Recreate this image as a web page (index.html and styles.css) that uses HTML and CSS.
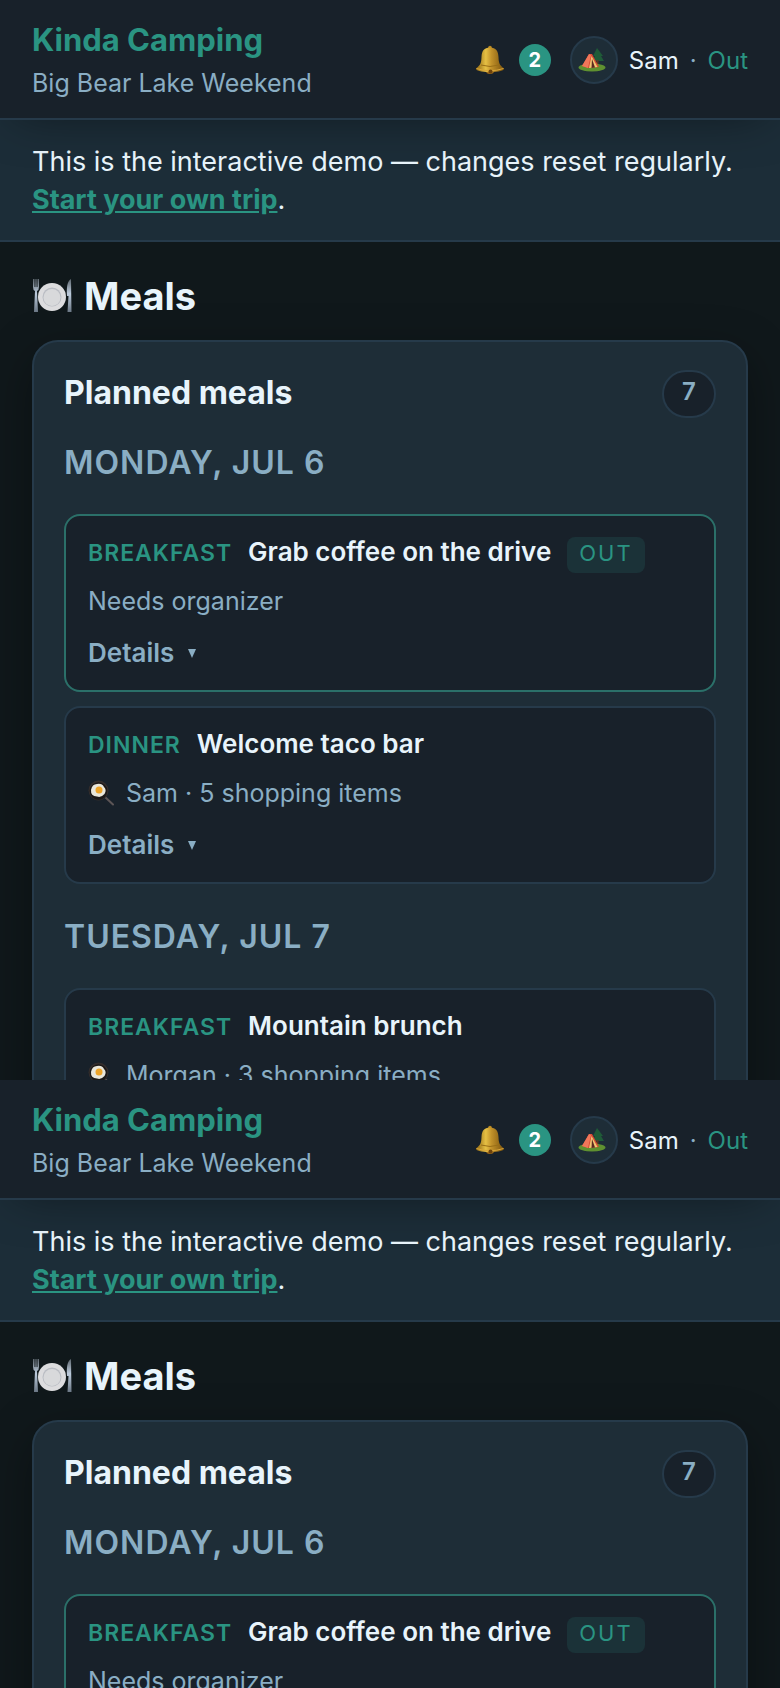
FILE: index.html
```
<!DOCTYPE html>
<html lang="en">
<head>
  <meta charset="UTF-8">
  <meta name="viewport" content="width=device-width, initial-scale=1.0">
  <title>Kinda Camping - Meals</title>
  <link rel="stylesheet" href="styles.css">
</head>
<body>
  <!-- shared icons -->
  <svg class="sprite" aria-hidden="true">
    <defs>
      <linearGradient id="gold" x1="0" x2="1" y1="0" y2="0">
        <stop offset="0" stop-color="#8d6410"/>
        <stop offset="0.35" stop-color="#e6c044"/>
        <stop offset="0.55" stop-color="#c2922a"/>
        <stop offset="1" stop-color="#7a520c"/>
      </linearGradient>
      <linearGradient id="steel" x1="0" x2="0" y1="0" y2="1">
        <stop offset="0" stop-color="#5d666e"/>
        <stop offset="0.45" stop-color="#bccbdc"/>
        <stop offset="1" stop-color="#6c7886"/>
      </linearGradient>
      <symbol id="bell" viewBox="0 0 30 30">
        <circle cx="15" cy="2.500" r="1.800" fill="#b98a22"/>
        <ellipse cx="15" cy="26" rx="4" ry="3" fill="#a06a18"/>
        <path d="M15 2.500C9 2.500 6.800 6 6.500 12C6.300 18 5.500 20 1 23.500C0.500 25.500 6 27 15 27S29.500 25.500 29 23.500C24.500 20 23.700 18 23.500 12C23.200 6 21 2.500 15 2.500Z" fill="url(#gold)"/>
        <path d="M1.500 23.500Q15 28 28.500 23.500" fill="none" stroke="#d9a63a" stroke-width="1"/>
        <path d="M6 20Q15 23 24 20" fill="none" stroke="#9a6f16" stroke-width="1"/>
        <circle cx="15.500" cy="26.500" r="2" fill="#6d430d"/>
      </symbol>
      <symbol id="tent" viewBox="0 0 28 26">
        <path d="M19 1L15 9H17L14 14H26L23 9H25Z" fill="#1f5b38"/>
        <path d="M18.500 13H20.500V20H18.500Z" fill="#5a3c22"/>
        <ellipse cx="14" cy="20.500" rx="13.500" ry="4" fill="#5f9130"/>
        <path d="M11 7L14 7L21 20L10 21L4 19Z" fill="#d94a34"/>
        <path d="M11 7L4 19L10 21L13 8Z" fill="#f0775a"/>
        <path d="M13.500 9L19.500 20L11 21Z" fill="#f2c572"/>
        <path d="M14 12L17 20.500L13.500 21Z" fill="#5b2a20"/>
      </symbol>
      <symbol id="plate" viewBox="0 0 40 36">
        <path d="M1 1V9Q1 12 3 13L2 34H6L5 13Q7 12 7 9V1L5.500 1V9H4.600V1H3.400V9H2.500V1Z" fill="url(#steel)"/>
        <path d="M39 1C35 3 34.500 10 35 18H36.500L35.500 34H39.500Z" fill="url(#steel)"/>
        <circle cx="20" cy="19" r="14" fill="#dcdcde"/>
        <circle cx="20" cy="19" r="9.500" fill="#b9bcc3"/>
        <circle cx="20" cy="19.500" r="8.500" fill="#d8d9db"/>
      </symbol>
      <symbol id="pan" viewBox="0 0 26 26">
        <path d="M17 17L25 24.500" stroke="#5c5556" stroke-width="2" stroke-linecap="round"/>
        <circle cx="10.500" cy="10.500" r="10" fill="#332d2c"/>
        <circle cx="10.500" cy="11" r="8.800" fill="#1c1817"/>
        <path d="M3 10Q4 4 9 4Q14 3 16 7Q19 10 16.500 14Q13 18 9 16.500Q2.500 16 3 10Z" fill="#e9e6da"/>
        <circle cx="11" cy="10" r="3.500" fill="#eda429"/>
      </symbol>
    </defs>
  </svg>

  <section class="screen">
    <header class="topbar">
      <div class="brand">
        <a href="#" class="brand-name">Kinda Camping</a>
        <p class="trip-name">Big Bear Lake Weekend</p>
      </div>
      <div class="user">
        <button type="button" class="bell-btn" aria-label="2 notifications">
          <svg class="bell"><use href="#bell"/></svg>
          <span class="count">2</span>
        </button>
        <span class="avatar"><svg class="tent"><use href="#tent"/></svg></span>
        <span class="user-name">Sam</span>
        <span class="dot">·</span>
        <a href="#" class="sign-out">Out</a>
      </div>
    </header>
    <p class="demo-banner">This is the interactive demo — changes reset regularly. <a href="#">Start your own trip</a>.</p>
    <main class="content">
      <h1><svg class="plate"><use href="#plate"/></svg>Meals</h1>
      <section class="panel">
        <div class="panel-head">
          <h2>Planned meals</h2>
          <span class="total">7</span>
        </div>
        <h3>Monday, Jul 6</h3>
        <article class="meal meal-open">
          <div class="meal-head">
            <span class="slot">Breakfast</span>
            <h4>Grab coffee on the drive</h4>
            <span class="tag">Out</span>
          </div>
          <p class="meta">Needs organizer</p>
          <button type="button" class="details">Details <svg class="caret" viewBox="0 0 8 9"><path d="M0 0H8L4 9Z"/></svg></button>
        </article>
        <article class="meal">
          <div class="meal-head">
            <span class="slot">Dinner</span>
            <h4>Welcome taco bar</h4>
          </div>
          <p class="meta"><svg class="pan"><use href="#pan"/></svg>Sam · 5 shopping items</p>
          <button type="button" class="details">Details <svg class="caret" viewBox="0 0 8 9"><path d="M0 0H8L4 9Z"/></svg></button>
        </article>
        <h3>Tuesday, Jul 7</h3>
        <article class="meal">
          <div class="meal-head">
            <span class="slot">Breakfast</span>
            <h4>Mountain brunch</h4>
          </div>
          <p class="meta"><svg class="pan"><use href="#pan"/></svg>Morgan · 3 shopping items</p>
        </article>
      </section>
    </main>
  </section>

  <section class="screen">
    <header class="topbar">
      <div class="brand">
        <a href="#" class="brand-name">Kinda Camping</a>
        <p class="trip-name">Big Bear Lake Weekend</p>
      </div>
      <div class="user">
        <button type="button" class="bell-btn" aria-label="2 notifications">
          <svg class="bell"><use href="#bell"/></svg>
          <span class="count">2</span>
        </button>
        <span class="avatar"><svg class="tent"><use href="#tent"/></svg></span>
        <span class="user-name">Sam</span>
        <span class="dot">·</span>
        <a href="#" class="sign-out">Out</a>
      </div>
    </header>
    <p class="demo-banner">This is the interactive demo — changes reset regularly. <a href="#">Start your own trip</a>.</p>
    <main class="content">
      <h1><svg class="plate"><use href="#plate"/></svg>Meals</h1>
      <section class="panel">
        <div class="panel-head">
          <h2>Planned meals</h2>
          <span class="total">7</span>
        </div>
        <h3>Monday, Jul 6</h3>
        <article class="meal meal-open">
          <div class="meal-head">
            <span class="slot">Breakfast</span>
            <h4>Grab coffee on the drive</h4>
            <span class="tag">Out</span>
          </div>
          <p class="meta">Needs organizer</p>
        </article>
      </section>
    </main>
  </section>
</body>
</html>
```
FILE: styles.css
```
* {
  box-sizing: border-box;
}

body {
  display: grid;
  grid-template-rows: 1080px 1fr;
  height: 100vh;
  margin: 0;
  overflow: hidden;
  background-color: #10181b;
  color: #e8f4fb;
  font-family: Inter, "Liberation Sans", sans-serif;
  font-size: 25px;
}

h1, h2, h3, h4, p {
  margin: 0;
}

a {
  color: #2a9482;
}

button {
  padding: 0;
  border: none;
  background: none;
  font-family: inherit;
  cursor: pointer;
}

.sprite {
  position: absolute;
  width: 0;
  height: 0;
}

.screen {
  min-height: 0;
  overflow: hidden;
}

.topbar {
  position: relative;
  display: flex;
  justify-content: space-between;
  align-items: center;
  padding: 17px 32px 15px;
  background-color: #18212a;
  border-bottom: 2px solid #263a4a;
  box-shadow: 0 8px 48px -16px rgba(0, 0, 0, 0.5);
}

.brand-name {
  display: block;
  font-size: 31px;
  line-height: 46px;
  font-weight: 700;
  text-decoration: none;
}

.trip-name {
  color: #8aaec4;
  line-height: 40px;
}

.user {
  display: flex;
  align-items: center;
  gap: 11px;
  font-size: 24px;
}

.bell-btn {
  display: flex;
  align-items: center;
  gap: 14px;
  margin-right: 8px;
}

.bell {
  width: 30px;
  height: 30px;
}

.count {
  width: 32px;
  border-radius: 50%;
  background-color: #2a9482;
  color: #fff;
  font-size: 20px;
  line-height: 32px;
  font-weight: 700;
  text-align: center;
}

.avatar {
  display: flex;
  align-items: center;
  width: 48px;
  height: 48px;
  padding-left: 6px;
  border: 2px solid #263a4a;
  border-radius: 50%;
  background-color: #1e2d37;
}

.tent {
  width: 28px;
  height: 26px;
}

.dot {
  color: #8aaec4;
}

.sign-out {
  text-decoration: none;
}

.demo-banner {
  padding: 23px 32px 21px;
  background-color: #1c2d38;
  border-bottom: 2px solid #263a4a;
  font-size: 27px;
  line-height: 38px;
}

.demo-banner a {
  font-weight: 700;
}

.content {
  padding: 28px 32px;
}

h1 {
  display: flex;
  align-items: center;
  gap: 12px;
  margin-bottom: 18px;
  font-size: 38px;
  line-height: 52px;
  font-weight: 700;
}

.plate {
  width: 40px;
  height: 36px;
}

.panel {
  padding: 28px 30px;
  background-color: #1e2d37;
  border: 2px solid #263a4a;
  border-radius: 26px;
  box-shadow: 0 16px 48px rgba(0, 0, 0, 0.35);
}

.panel-head {
  display: flex;
  justify-content: space-between;
}

h2 {
  font-size: 32px;
  line-height: 46px;
  font-weight: 700;
}

.total {
  width: 54px;
  height: 48px;
  border: 2px solid #263a4a;
  border-radius: 24px;
  background-color: #18212a;
  color: #8aaec4;
  font-size: 24px;
  line-height: 40px;
  font-weight: 600;
  text-align: center;
}

h3 {
  padding: 22px 0 28px;
  color: #8aaec4;
  font-size: 32px;
  line-height: 46px;
  font-weight: 600;
  letter-spacing: 1px;
  text-transform: uppercase;
}

.meal {
  padding: 18px 22px;
  border: 2px solid #263a4a;
  border-radius: 16px;
  background-color: #18212a;
}

.meal + .meal {
  margin-top: 14px;
}

.meal + h3 {
  padding-top: 30px;
}

.meal-open {
  border-color: #2b7069;
}

.meal-head {
  display: flex;
  align-items: baseline;
  gap: 16px;
}

.slot {
  color: #2a9482;
  font-size: 23px;
  font-weight: 600;
  letter-spacing: 1px;
  text-transform: uppercase;
}

h4 {
  font-size: 26px;
  line-height: 36px;
  font-weight: 600;
}

.tag {
  margin-bottom: -4px;
  padding: 0 12px 4px;
  border-radius: 8px;
  background-color: #1b3238;
  color: #2a9482;
  font-size: 22px;
  line-height: 32px;
  letter-spacing: 2px;
  text-transform: uppercase;
}

.meta {
  display: flex;
  align-items: center;
  padding-top: 12px;
  color: #8aaec4;
  line-height: 38px;
}

.pan {
  width: 26px;
  height: 26px;
  margin-right: 12px;
}

.details {
  display: flex;
  align-items: center;
  gap: 14px;
  padding-top: 14px;
  color: #8aaec4;
  font-size: 26px;
  line-height: 38px;
  font-weight: 600;
}

.caret {
  width: 8px;
  height: 9px;
  fill: currentColor;
}
```
